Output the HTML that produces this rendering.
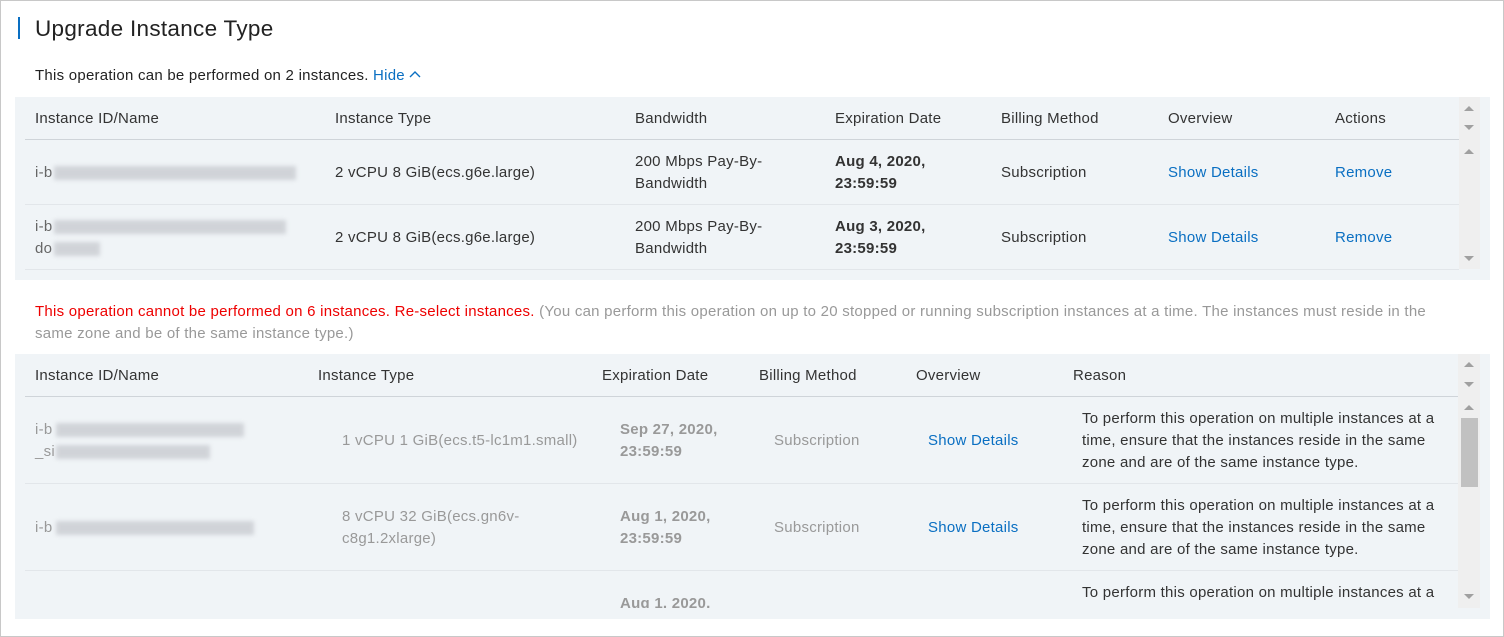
<!DOCTYPE html>
<html><head><meta charset="utf-8"><style>
*{margin:0;padding:0;box-sizing:border-box}
body{width:1504px;height:637px;overflow:hidden;background:#fff;font-family:"Liberation Sans",Arial,sans-serif;font-size:15px;letter-spacing:.25px;color:#333;position:relative}
.frame{position:absolute;left:0;top:0;width:1504px;height:637px;border:1px solid #c8c8c8}
.a{position:absolute;white-space:nowrap;line-height:22px}
.panel{position:absolute;background:#f0f4f7}
.line{position:absolute;height:1px}
.blue{color:#0a6fc2}
.g{color:#999}
.b{font-weight:bold}
.blur{position:absolute;height:14px;background:#c9ccd1;filter:blur(2px);opacity:.8}
.sb{position:absolute;background:#efefef}
.tri{position:absolute;width:0;height:0;border-left:5px solid transparent;border-right:5px solid transparent}
.up{border-bottom:5px solid #a0a0a0}
.dn{border-top:5px solid #a0a0a0}
</style></head><body>
<div class="frame"></div>
<div style="position:absolute;left:18px;top:17px;width:2px;height:22px;background:#0a6fc2"></div>
<div class="a" style="left:35px;top:15px;font-size:22.5px;letter-spacing:.3px;line-height:28px;color:#222">Upgrade Instance Type</div>
<div class="a" style="left:35px;top:65px;color:#222">This operation can be performed on 2 instances. <span class="blue">Hide</span> <svg width="12" height="8" viewBox="0 0 12 8" style="vertical-align:2px"><path d="M1 7L6 2L11 7" fill="none" stroke="#0a6fc2" stroke-width="1.4"/></svg></div>

<div class="panel" style="left:15px;top:97px;width:1475px;height:183px"></div>
<div class="sb" style="left:1459px;top:97px;width:21px;height:172px"></div>
<div class="tri up" style="left:1464px;top:106px"></div>
<div class="tri dn" style="left:1464px;top:125px"></div>
<div class="tri up" style="left:1464px;top:149px"></div>
<div class="tri dn" style="left:1464px;top:256px"></div>
<div class="line" style="left:25px;top:139px;width:1434px;background:#cfd4d9"></div>
<div class="line" style="left:25px;top:204px;width:1434px;background:#e2e6ea"></div>
<div class="line" style="left:25px;top:269px;width:1434px;background:#e2e6ea"></div>
<div class="a" style="left:35px;top:108px">Instance ID/Name</div>
<div class="a" style="left:335px;top:108px">Instance Type</div>
<div class="a" style="left:635px;top:108px">Bandwidth</div>
<div class="a" style="left:835px;top:108px">Expiration Date</div>
<div class="a" style="left:1001px;top:108px">Billing Method</div>
<div class="a" style="left:1168px;top:108px">Overview</div>
<div class="a" style="left:1335px;top:108px">Actions</div>

<div class="a" style="left:35px;top:162px;color:#666">i-b</div>
<div class="blur" style="left:54px;top:166px;width:242px"></div>
<div class="a" style="left:335px;top:162px">2 vCPU 8 GiB(ecs.g6e.large)</div>
<div class="a" style="left:635px;top:151px">200 Mbps Pay-By-<br>Bandwidth</div>
<div class="a b" style="left:835px;top:151px">Aug 4, 2020,<br>23:59:59</div>
<div class="a" style="left:1001px;top:162px">Subscription</div>
<div class="a blue" style="left:1168px;top:162px">Show Details</div>
<div class="a blue" style="left:1335px;top:162px">Remove</div>

<div class="a" style="left:35px;top:216px;color:#666">i-b<br>do</div>
<div class="blur" style="left:54px;top:220px;width:232px"></div>
<div class="blur" style="left:54px;top:242px;width:46px"></div>
<div class="a" style="left:335px;top:227px">2 vCPU 8 GiB(ecs.g6e.large)</div>
<div class="a" style="left:635px;top:216px">200 Mbps Pay-By-<br>Bandwidth</div>
<div class="a b" style="left:835px;top:216px">Aug 3, 2020,<br>23:59:59</div>
<div class="a" style="left:1001px;top:227px">Subscription</div>
<div class="a blue" style="left:1168px;top:227px">Show Details</div>
<div class="a blue" style="left:1335px;top:227px">Remove</div>

<div class="a" style="left:35px;top:301px;white-space:normal;width:1430px"><span style="color:#e00">This operation cannot be performed on 6 instances. Re-select instances.</span> <span class="g">(You can perform this operation on up to 20 stopped or running subscription instances at a time. The instances must reside in the same zone and be of the same instance type.)</span></div>

<div class="panel" style="left:15px;top:354px;width:1475px;height:265px"></div>
<div class="sb" style="left:1458px;top:354px;width:22px;height:254px"></div>
<div class="tri up" style="left:1464px;top:362px"></div>
<div class="tri dn" style="left:1464px;top:382px"></div>
<div class="tri up" style="left:1464px;top:405px"></div>
<div style="position:absolute;left:1461px;top:418px;width:17px;height:69px;background:#c1c1c1"></div>
<div class="tri dn" style="left:1464px;top:594px"></div>
<div class="line" style="left:25px;top:396px;width:1433px;background:#cfd4d9"></div>
<div class="line" style="left:25px;top:483px;width:1433px;background:#e2e6ea"></div>
<div class="line" style="left:25px;top:570px;width:1433px;background:#e2e6ea"></div>
<div class="a" style="left:35px;top:365px">Instance ID/Name</div>
<div class="a" style="left:318px;top:365px">Instance Type</div>
<div class="a" style="left:602px;top:365px">Expiration Date</div>
<div class="a" style="left:759px;top:365px">Billing Method</div>
<div class="a" style="left:916px;top:365px">Overview</div>
<div class="a" style="left:1073px;top:365px">Reason</div>

<div class="a g" style="left:35px;top:419px">i-b<br>_si</div>
<div class="blur" style="left:56px;top:423px;width:188px"></div>
<div class="blur" style="left:56px;top:445px;width:154px"></div>
<div class="a g" style="left:342px;top:430px">1 vCPU 1 GiB(ecs.t5-lc1m1.small)</div>
<div class="a b g" style="left:620px;top:419px">Sep 27, 2020,<br>23:59:59</div>
<div class="a g" style="left:774px;top:430px">Subscription</div>
<div class="a blue" style="left:928px;top:430px">Show Details</div>
<div class="a" style="left:1082px;top:408px">To perform this operation on multiple instances at a<br>time, ensure that the instances reside in the same<br>zone and are of the same instance type.</div>

<div class="a g" style="left:35px;top:517px">i-b</div>
<div class="blur" style="left:56px;top:521px;width:198px"></div>
<div class="a g" style="left:342px;top:506px">8 vCPU 32 GiB(ecs.gn6v-<br>c8g1.2xlarge)</div>
<div class="a b g" style="left:620px;top:506px">Aug 1, 2020,<br>23:59:59</div>
<div class="a g" style="left:774px;top:517px">Subscription</div>
<div class="a blue" style="left:928px;top:517px">Show Details</div>
<div class="a" style="left:1082px;top:495px">To perform this operation on multiple instances at a<br>time, ensure that the instances reside in the same<br>zone and are of the same instance type.</div>

<div style="position:absolute;left:15px;top:571px;width:1443px;height:37px;overflow:hidden">
<div class="a b g" style="left:605px;top:22px">Aug 1, 2020,</div>
<div class="a" style="left:1067px;top:11px">To perform this operation on multiple instances at a</div>
</div>
</body></html>
